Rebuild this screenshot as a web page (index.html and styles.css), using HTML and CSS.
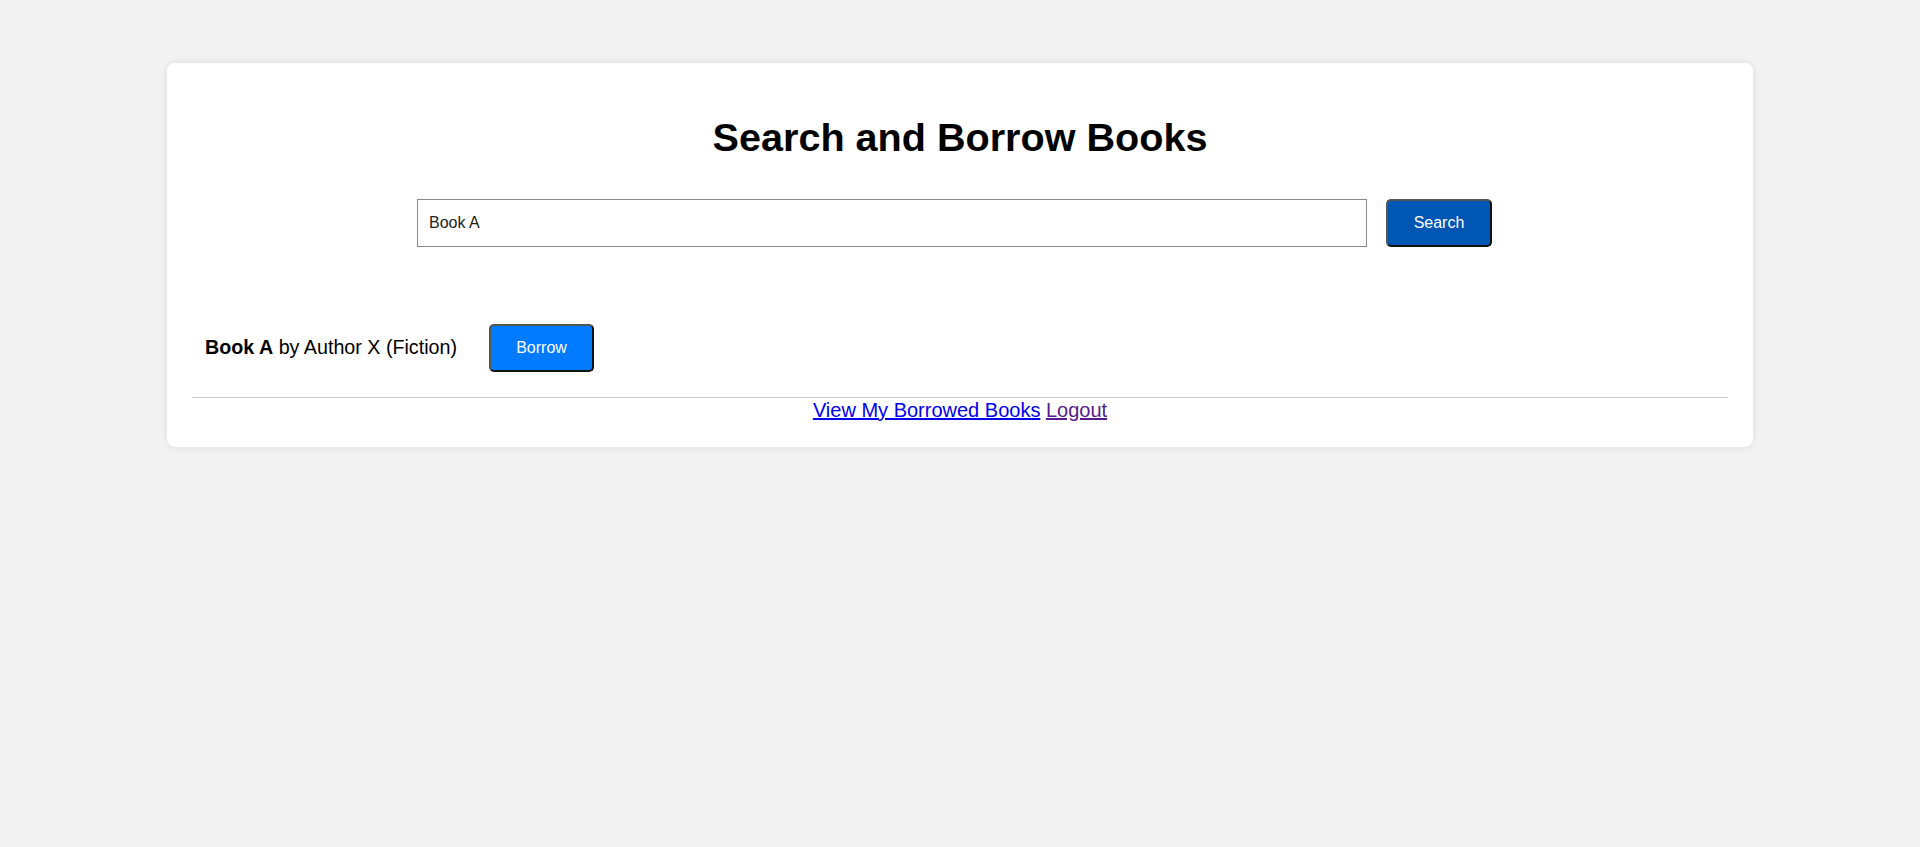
FILE: index.html
```html
<!DOCTYPE html>
<html lang="en">
<head>
<meta charset="utf-8">
<title>Search and Borrow Books</title>
<link rel="stylesheet" href="styles.css">
</head>
<body>
<div class="card">
  <h1 class="title">Search and Borrow Books</h1>
  <form class="search-form">
    <input class="search-input" type="text" value="Book A">
    <button class="btn btn-search" type="button">Search</button>
  </form>
  <ul class="book-list">
    <li class="book-item">
      <span class="book-text"><strong>Book A</strong> by Author X (Fiction)</span>
      <button class="btn btn-borrow" type="button">Borrow</button>
    </li>
  </ul>
  <div class="links">
    <a class="link" href="#borrowed">View My Borrowed Books</a> <a class="link link-visited" href="#logout">Logout</a>
  </div>
</div>
</body>
</html>
```

FILE: styles.css
```css
html, body {
  margin: 0;
  padding: 0;
}

body {
  background: #f3f3f3;
  font-family: "Liberation Sans", Arial, sans-serif;
  color: #000;
  min-height: 847px;
}

.card {
  width: 1536px;
  margin: 63px auto 0;
  padding: 25px;
  background: #fff;
  border-radius: 8px;
  box-shadow: 0 0 10px rgba(0, 0, 0, 0.1);
}

.title {
  margin: 26px 0 39px;
  font-size: 39.6px;
  line-height: 46px;
  font-weight: 700;
  text-align: center;
}

.search-form {
  display: flex;
  justify-content: center;
  align-items: center;
  gap: 19px;
  margin: 0;
  padding-right: 11px;
}

.search-input {
  box-sizing: border-box;
  width: 950px;
  height: 48px;
  margin: 0;
  padding: 0 11px;
  border: 1px solid #8a8a8a;
  border-radius: 0;
  font-family: "Liberation Sans", Arial, sans-serif;
  font-size: 16px;
  color: #222;
  background: #fff;
  outline: none;
}

.btn {
  box-sizing: border-box;
  width: 106px;
  height: 48px;
  margin: 0;
  padding: 0;
  border: 2px solid;
  border-color: #555 #111 #111 #555;
  border-radius: 5px;
  font-family: "Liberation Sans", Arial, sans-serif;
  font-size: 16px;
  color: #fff;
  cursor: pointer;
}

.btn-search {
  background: #0056b3;
}

.btn-borrow {
  background: #007bff;
  width: 105px;
}

.book-list {
  list-style: none;
  margin: 77px 0 0;
  padding: 0 0 25px;
  border-bottom: 1px solid #cccccc;
}

.book-item {
  display: flex;
  align-items: center;
  gap: 32px;
  padding-left: 13px;
}

.book-text {
  font-size: 19.7px;
  line-height: 22px;
  position: relative;
  top: -1px;
}

.links {
  text-align: center;
  font-size: 20px;
  line-height: 23px;
  padding-top: 1px;
}

.link {
  color: #0000ee;
  text-decoration: underline;
}

.link-visited {
  color: #551a8b;
}
```
